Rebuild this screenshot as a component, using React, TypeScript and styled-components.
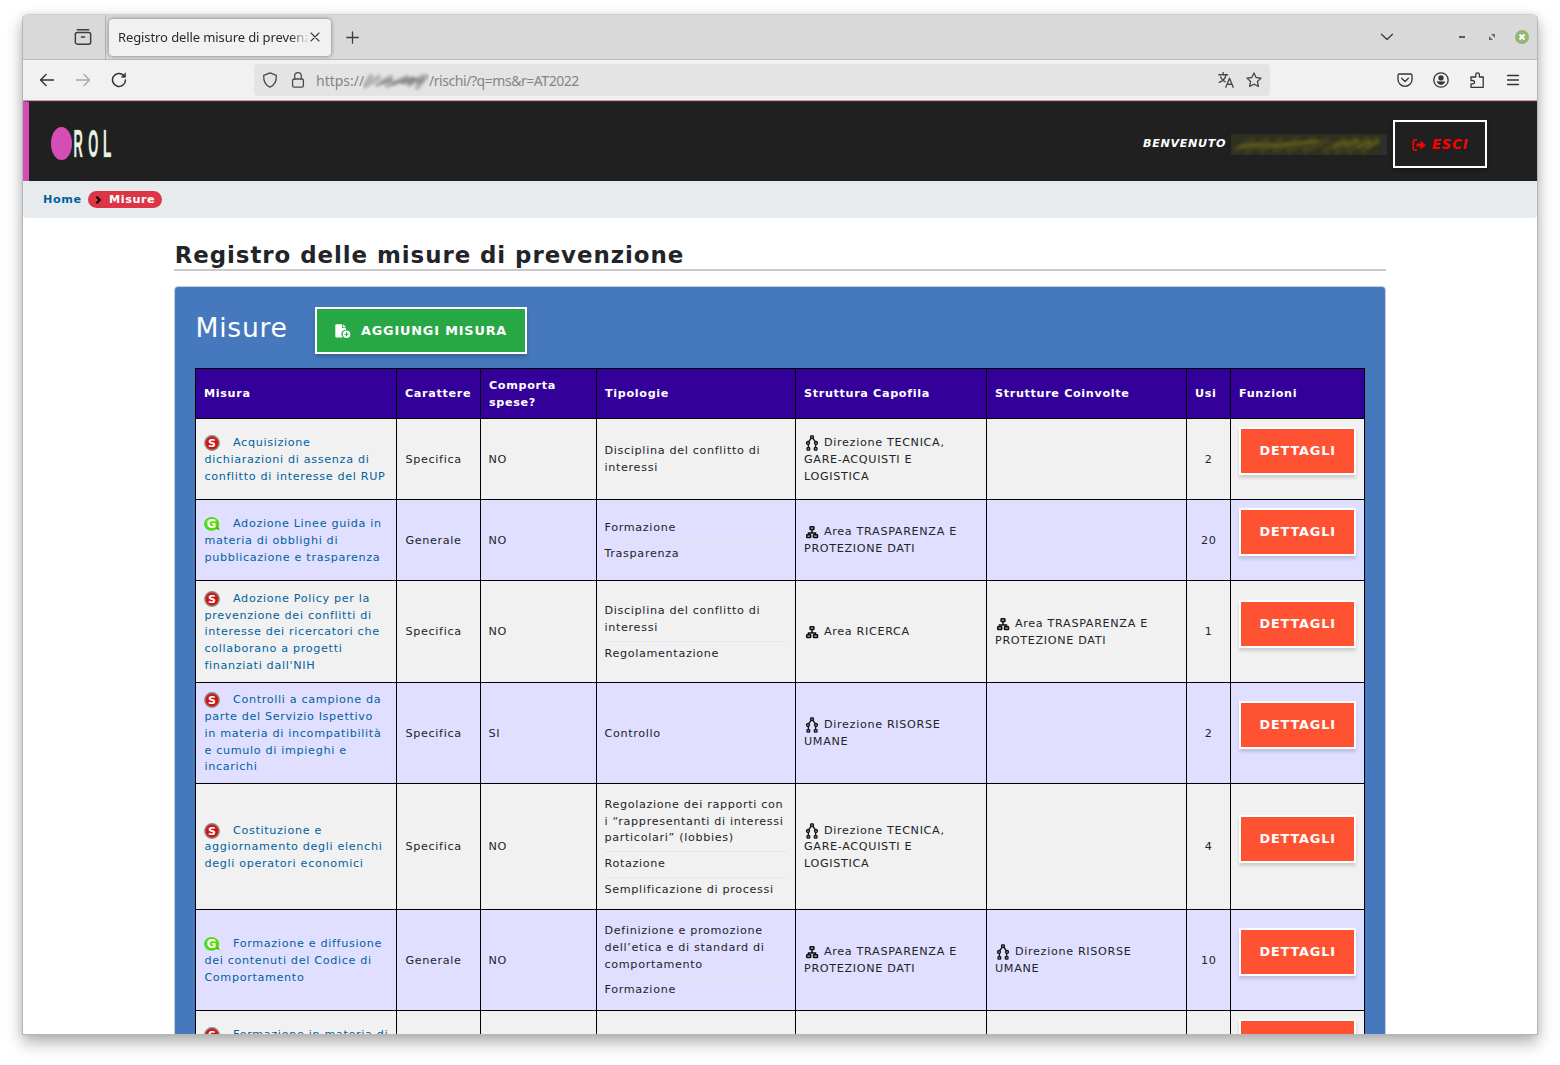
import React from "react";
import styled, { createGlobalStyle, css } from "styled-components";

const GlobalStyle = createGlobalStyle`
  *, *::before, *::after { box-sizing: border-box; }
  html, body { margin: 0; background: #fff; }
  body { overflow: hidden; font-family: "DejaVu Sans", sans-serif; color: #212529; }
`;

const Desktop = styled.div`
  width: 1560px;
  height: 1065px;
  padding: 14px 22px;
  overflow: hidden;
`;

const Window = styled.div`
  display: flex;
  flex-direction: column;
  width: 1516px;
  height: 1021px;
  border: 1px solid #b6b6b6;
  border-top-color: #cfcfcf;
  border-radius: 6px 6px 0 0;
  background: #fff;
  overflow: hidden;
  box-shadow: 0 8px 16px rgba(0, 0, 0, 0.3), 0 0 8px rgba(0, 0, 0, 0.08);
`;

const TabStrip = styled.div`
  display: flex;
  align-items: center;
  flex: none;
  height: 45px;
  background: #d9d9d9;
  border-bottom: 1px solid #b9b9b9;
  color: #3c3c3c;
  svg { display: block; flex: none; }
`;

const FirefoxView = styled.div`
  display: flex;
  align-items: center;
  justify-content: flex-end;
  width: 83px;
  height: 44px;
  padding-right: 13px;
  border-right: 1px solid #b4b4b4;
`;

const Tab = styled.div`
  display: flex;
  align-items: center;
  width: 222px;
  height: 37px;
  margin-left: 3px;
  padding: 0 11px 0 9px;
  border-radius: 4px;
  background: #f1f1f1;
  box-shadow: 0 0 4px rgba(0, 0, 0, 0.45);
`;

const TabTitle = styled.div`
  flex: 1;
  overflow: hidden;
  white-space: nowrap;
  font: 13px/20px "Noto Sans", "Open Sans", sans-serif;
  letter-spacing: -0.1px;
  color: #2a2a2a;
  mask-image: linear-gradient(to right, #000 172px, transparent 191px);
`;

const NewTab = styled.div`
  margin-left: 15px;
`;

const WindowControls = styled.div`
  display: flex;
  align-items: center;
  margin-left: auto;
  padding-right: 8px;
`;

const Spacer = styled.div<{ $w: number }>`
  flex: none;
  width: ${(p) => p.$w}px;
`;

const Toolbar = styled.div`
  display: flex;
  align-items: center;
  flex: none;
  height: 41px;
  background: #f1f1f1;
  border-bottom: 1px solid #aaa;
  color: #333;
  svg { display: block; flex: none; }
`;

const NavButtons = styled.div`
  display: flex;
  flex: none;
  gap: 20px;
  width: 231px;
  padding-left: 16px;
`;

const AddressBar = styled.div`
  display: flex;
  align-items: center;
  flex: none;
  width: 1016px;
  height: 32px;
  padding: 0 8px;
  border-radius: 4px;
  background: #e4e4e4;
  color: #4a4a4a;
`;

const Url = styled.div`
  display: flex;
  align-items: center;
  flex: 1;
  margin-left: 10px;
  padding-top: 1px;
  font: 14px/20px "Noto Sans", "Open Sans", sans-serif;
  color: #858585;
`;

const UrlPart = styled.span<{ $ls: number; $w: number }>`
  width: ${(p) => p.$w}px;
  white-space: nowrap;
  letter-spacing: ${(p) => p.$ls}px;
`;

const ToolbarIcons = styled.div`
  display: flex;
  flex: none;
  gap: 20px;
  margin-left: 127px;
`;

const Page = styled.div`
  flex: 1;
  min-height: 0;
  overflow: hidden;
`;

const Header = styled.header`
  display: flex;
  align-items: center;
  height: 80px;
  padding: 5px 50px 0 21px;
  border-left: 6px solid #d64db6;
  border-top: 1px dotted #a3163c;
  background: #202020;
`;

const Welcome = styled.div`
  display: flex;
  align-items: center;
  margin-left: auto;
  font-size: 11.2px;
  font-weight: bold;
  font-style: italic;
  letter-spacing: 0.65px;
  color: #fff;
`;

const WelcomeLabel = styled.span`
  width: 88px;
  padding-bottom: 1px;
`;

const buttonBase = css`
  display: flex;
  align-items: center;
  border: 2px solid #fff;
  color: #fff;
  font-family: "DejaVu Sans", sans-serif;
  font-weight: bold;
  font-size: 12.8px;
  letter-spacing: 0.85px;
  line-height: 1.5;
  text-transform: uppercase;
  white-space: nowrap;
  text-decoration: none;
`;

const ExitButton = styled.a`
  ${buttonBase}
  width: 94px;
  height: 48px;
  margin-left: 6px;
  padding: 1px 0 0 17px;
  gap: 6px;
  font-size: 13.2px;
  color: #f00;
  box-shadow: 0 2px 4px rgba(0, 0, 0, 0.3);
`;

const AddButton = styled.a`
  ${buttonBase}
  width: 212px;
  height: 47px;
  padding-left: 18px;
  gap: 10px;
  background: #28a745;
  box-shadow: 0 3px 4px rgba(0, 0, 0, 0.2);
`;

const DetailButton = styled.a`
  ${buttonBase}
  width: 117px;
  height: 48px;
  margin-bottom: 16px;
  padding-left: 18.5px;
  background: #ff5233;
  box-shadow: 0 3px 3px rgba(0, 0, 0, 0.14);
`;

const Breadcrumb = styled.nav`
  display: flex;
  align-items: center;
  height: 37px;
  padding-left: 20px;
  border-radius: 0 0 4px 4px;
  background: #e7ebee;
  font-size: 11.2px;
  font-weight: bold;
  letter-spacing: 0.6px;
`;

const HomeLink = styled.a`
  width: 45px;
  color: #00629f;
`;

const Crumb = styled.span`
  display: flex;
  align-items: center;
  width: 74px;
  height: 17px;
  padding-left: 7px;
  gap: 7px;
  border-radius: 9px;
  background: #dc3545;
  color: #fff;
`;

const Container = styled.main`
  width: 1212px;
  margin: 0 auto;
  padding-top: 20px;
`;

const Title = styled.h1`
  height: 33px;
  margin: 0 0 15px;
  padding-left: 0.7px;
  border-bottom: 2px solid #c9c9c9;
  font-size: 22.9px;
  line-height: 34px;
  font-weight: bold;
  letter-spacing: 0.95px;
`;

const Card = styled.section`
  padding: 20px;
  border: 1px solid #c7d0dc;
  border-radius: 4px;
  background: #4678bd;
`;

const CardHead = styled.div`
  display: flex;
  height: 61px;
`;

const CardTitle = styled.h2`
  width: 120px;
  margin: 0;
  padding-left: 0.6px;
  font-size: 26.6px;
  line-height: 41px;
  font-weight: normal;
  letter-spacing: 0.7px;
  color: #fff;
`;

const Table = styled.table`
  width: 1170px;
  table-layout: fixed;
  border-spacing: 0;
  border-collapse: separate;
  border-top: 1px solid #000;
  border-left: 1px solid #000;
  font-size: 11.2px;
  line-height: 16.8px;
  letter-spacing: 0.66px;
`;

const Col = styled.col<{ $w: number }>`
  width: ${(p) => p.$w}px;
`;

const Th = styled.th`
  height: 50px;
  padding: 2px 8px 0;
  border-right: 1px solid #000;
  border-bottom: 1px solid #000;
  background: #330099;
  color: #fff;
  text-align: left;
  vertical-align: middle;
`;

const Tr = styled.tr<{ $h: number; $alt: boolean }>`
  height: ${(p) => p.$h}px;
  background: ${(p) => (p.$alt ? "#e0dfff" : "#f1f1f1")};
`;

const Td = styled.td<{ $center?: boolean; $top?: boolean; $shift?: number; $left?: number }>`
  padding: ${(p) => p.$shift ?? 2}px 8px 0 ${(p) => p.$left ?? 8.4}px;
  border-right: 1px solid #000;
  border-bottom: 1px solid #000;
  vertical-align: middle;
  text-align: ${(p) => (p.$center ? "center" : "left")};
  ${(p) => p.$top && css`
    padding-top: 15.6px;
    vertical-align: top;
    white-space: nowrap;
  `}
`;

const ActionCell = styled(Td)`
  padding: 0 8px;
`;

const MeasureLink = styled.a`
  color: #00629f;
  svg { vertical-align: middle; margin-right: 13px; margin-left: -0.4px; }
`;

const Unit = styled.span`
  svg { vertical-align: middle; margin-right: 4px; }
`;

const TypeItem = styled.div<{ $alt: boolean }>`
  padding: 4px 0;
  & + & { border-top: 1px solid ${(p) => (p.$alt ? "#e4e8ea" : "#e7eaec")}; }
`;

const stroke = { fill: "none", stroke: "currentColor", strokeLinecap: "round", strokeLinejoin: "round" } as const;

const Glyph = ({ children, w = 1.4, size = 16 }: { children: React.ReactNode; w?: number; size?: number }) => (
  <svg width={size} height={size} viewBox="0 0 16 16" {...stroke} strokeWidth={w}>{children}</svg>
);

const Logo = () => (
  <svg width="64" height="36" viewBox="0 0 64 36">
    <ellipse cx="11.5" cy="17.5" rx="10.5" ry="16.5" fill="#d64db6" />
    <g fontFamily="Liberation Sans, sans-serif" fontSize="38" fontWeight="bold" fill="#efefe6" stroke="#3fae6c" strokeWidth=".7" paintOrder="stroke">
      <text transform="translate(23.5 30.500) scale(.34 1)">R</text>
      <text transform="translate(38.3 30.500) scale(.34 1)">O</text>
      <text transform="translate(53 30.500) scale(.36 1)">L</text>
    </g>
  </svg>
);

const UrlSmudge = () => (
  <svg width="66" height="20" viewBox="0 0 66 20">
    <defs><filter id="us" x="-20%" y="-40%" width="140%" height="180%"><feGaussianBlur stdDeviation="1.7" /></filter></defs>
    <g filter="url(#us)" fill="none" strokeLinecap="round">
      <path d="M2 15 8 5M4 14l12-8M14 14l14-8M46 14l14-9M54 17l10-12M24 15l20-9" stroke="#b0b0b0" strokeWidth="4.400" />
      <path d="M19 12l9-3M30 13l14-5M40 12l10-5M46 12l8-4M55 12l5-4" stroke="#8c8c8c" strokeWidth="3.400" />
    </g>
  </svg>
);

const NameSmudge = () => (
  <svg width="156" height="21" viewBox="0 0 156 21">
    <defs><filter id="ns" x="-5%" y="-20%" width="110%" height="140%"><feGaussianBlur stdDeviation="1.8" /></filter></defs>
    <rect width="156" height="21" fill="#303021" />
    <g filter="url(#ns)" fill="none">
      <path d="M4 16 24 6M14 17 38 6M28 17 52 6M42 17 68 5M56 17 84 5M72 17 98 6M92 18 114 5M104 18 126 4M116 18 138 4M130 18 148 4" stroke="#41411d" strokeWidth="6" />
      <path d="M8 13c22-5 34 1 52-3 10-2 18-1 28-3M102 13 116 7M114 12 128 6M126 13 140 7M136 14 148 7" stroke="#5a5a1e" strokeWidth="3" />
    </g>
    <rect x="151" width="5" height="21" fill="#2e2e31" />
  </svg>
);

const SignOutIcon = () => (
  <svg width="14" height="14" viewBox="0 0 14 14">
    <path d="M5 1.800H2.800A1.500 1.500 0 0 0 1.300 3.300v7.400a1.500 1.500 0 0 0 1.500 1.500H5" fill="none" stroke="#f00" strokeWidth="1.700" />
    <path d="M4.600 5.400h4V2.500L13.800 7l-5.200 4.500V8.600h-4z" fill="#f00" />
  </svg>
);

const FileAddIcon = () => (
  <svg width="16" height="16" viewBox="0 0 16 16" fill="#fff">
    <path d="M1.500 1.200h5.700v3.900h3.700v1.600a4.600 4.600 0 0 0-3.300 7.800H1.500A1.200 1.200 0 0 1 .3 13.300V2.400A1.200 1.200 0 0 1 1.500 1.200zM8.100 1.200l3 3H8.100z" />
    <path fillRule="evenodd" d="M11.500 7.400a3.800 3.800 0 1 1 0 7.600 3.800 3.800 0 0 1 0-7.600zm-.5 1.800v1.500H9.500v1.100H11v1.500h1.100v-1.500h1.500v-1.100h-1.500V9.200z" />
  </svg>
);

const Badge = ({ kind }: { kind: "S" | "G" }) =>
  kind === "S" ? (
    <svg width="16" height="16" viewBox="0 0 16 16">
      <circle cx="8" cy="8" r="7.900" fill="#8b8785" />
      <circle cx="8" cy="8" r="6.400" fill="#d8100f" />
      <path d="M3 6a5.300 5.300 0 0 1 10 0z" fill="#a33" opacity=".7" />
      <text x="8" y="12" textAnchor="middle" fontFamily="DejaVu Sans, sans-serif" fontWeight="bold" fontSize="11" letterSpacing="0" fill="#fff">S</text>
    </svg>
  ) : (
    <svg width="16" height="16" viewBox="0 0 16 16">
      <ellipse cx="7.600" cy="7.800" rx="7.600" ry="6.900" fill="#4fdb0b" />
      <path d="M11 12.500 15.800 14.200 14 10z" fill="#43bd0a" />
      <path d="M2 6a6 5 0 0 1 11 0z" fill="#a2ee78" opacity=".6" />
      <text x="7.600" y="12" textAnchor="middle" fontFamily="DejaVu Sans, sans-serif" fontWeight="bold" fontSize="11.500" letterSpacing="0" fill="#fff">G</text>
    </svg>
  );

const UnitIcon = ({ kind }: { kind: "dir" | "area" }) =>
  kind === "dir" ? (
    <svg width="16" height="16" viewBox="0 0 16 16" fill="#999" stroke="#161616" strokeWidth="1.300">
      <path d="M7.400 3 4.800 6.500M8.600 3l2.600 3.500M4.400 9v4M11.600 9v4" />
      <rect x="6.600" y=".8" width="2.800" height="2.500" rx=".6" />
      <circle cx="4" cy="8" r="1.500" /><circle cx="12" cy="8" r="1.500" />
      <rect x="3" y="12.700" width="2.700" height="2.500" rx=".6" /><rect x="10.300" y="12.700" width="2.700" height="2.500" rx=".6" />
    </svg>
  ) : (
    <svg width="16" height="16" viewBox="0 0 16 16" fill="#bbb" stroke="#0d0d0d" strokeWidth="1.500">
      <path d="M8 6v3M4.500 11.200V8.900h7v2.300" fill="none" />
      <rect x="6.100" y="2.700" width="3.800" height="2.800" rx=".5" />
      <rect x="2.700" y="10.800" width="4" height="2.700" rx=".5" /><rect x="9.500" y="10.800" width="4" height="2.700" rx=".5" />
    </svg>
  );

type UnitRef = { kind: "dir" | "area"; name: string };
type Measure = {
  badge: "S" | "G"; name: string; nature?: string; cost?: string; types?: string[];
  lead?: UnitRef; involved?: UnitRef; uses?: number; height: number; top?: boolean;
};

const tecnica: UnitRef = { kind: "dir", name: "Direzione TECNICA, GARE-ACQUISTI E LOGISTICA" };
const trasparenza: UnitRef = { kind: "area", name: "Area TRASPARENZA E PROTEZIONE DATI" };
const umane: UnitRef = { kind: "dir", name: "Direzione RISORSE UMANE" };

const measures: Measure[] = [
  { badge: "S", name: "Acquisizione dichiarazioni di assenza di conflitto di interesse del RUP", nature: "Specifica", cost: "NO", types: ["Disciplina del conflitto di interessi"], lead: tecnica, uses: 2, height: 81 },
  { badge: "G", name: "Adozione Linee guida in materia di obblighi di pubblicazione e trasparenza", nature: "Generale", cost: "NO", types: ["Formazione", "Trasparenza"], lead: trasparenza, uses: 20, height: 81 },
  { badge: "S", name: "Adozione Policy per la prevenzione dei conflitti di interesse dei ricercatori che collaborano a progetti finanziati dall'NIH", nature: "Specifica", cost: "NO", types: ["Disciplina del conflitto di interessi", "Regolamentazione"], lead: { kind: "area", name: "Area RICERCA" }, involved: trasparenza, uses: 1, height: 102 },
  { badge: "S", name: "Controlli a campione da parte del Servizio Ispettivo in materia di incompatibilità e cumulo di impieghi e incarichi", nature: "Specifica", cost: "SI", types: ["Controllo"], lead: umane, uses: 2, height: 101 },
  { badge: "S", name: "Costituzione e aggiornamento degli elenchi degli operatori economici", nature: "Specifica", cost: "NO", types: ["Regolazione dei rapporti con i “rappresentanti di interessi particolari” (lobbies)", "Rotazione", "Semplificazione di processi"], lead: tecnica, uses: 4, height: 126 },
  { badge: "G", name: "Formazione e diffusione dei contenuti del Codice di Comportamento", nature: "Generale", cost: "NO", types: ["Definizione e promozione dell’etica e di standard di comportamento", "Formazione"], lead: trasparenza, involved: umane, uses: 10, height: 101 },
  { badge: "S", name: "Formazione in materia di", height: 81, top: true },
];

const columns: [string, number][] = [
  ["Misura", 201], ["Carattere", 84], ["Comporta spese?", 116], ["Tipologie", 199],
  ["Struttura Capofila", 191], ["Strutture Coinvolte", 200], ["Usi", 44], ["Funzioni", 134],
];

const UnitLabel = ({ unit }: { unit?: UnitRef }) =>
  unit ? <Unit><UnitIcon kind={unit.kind} />{unit.name}</Unit> : null;

const MeasureRow = ({ m, alt }: { m: Measure; alt: boolean }) => (
  <Tr $h={m.height} $alt={alt}>
    <Td $top={m.top} $shift={2.6}><MeasureLink><Badge kind={m.badge} />{m.name}</MeasureLink></Td>
    <Td>{m.nature}</Td>
    <Td $left={7.5}>{m.cost}</Td>
    <Td $shift={2.4} $left={7.5}>{m.types?.map((t) => <TypeItem key={t} $alt={alt}>{t}</TypeItem>)}</Td>
    <Td $shift={2.4} $left={8}><UnitLabel unit={m.lead} /></Td>
    <Td $shift={2.4} $left={8}><UnitLabel unit={m.involved} /></Td>
    <Td $center>{m.uses}</Td>
    <ActionCell><DetailButton>Dettagli</DetailButton></ActionCell>
  </Tr>
);

export default function App() {
  return (
    <Desktop>
      <GlobalStyle />
      <Window>
        <TabStrip>
          <FirefoxView>
            <Glyph size={18} w={1.3}><path d="M3 1.600h10" /><rect x="1.200" y="4" width="13.600" height="10.400" rx="1.800" /><path d="M6.600 8h2.800" /></Glyph>
          </FirefoxView>
          <Tab>
            <TabTitle>Registro delle misure di prevenzione</TabTitle>
            <svg width="10" height="10" viewBox="0 0 10 10" {...stroke} strokeWidth="1.100"><path d="m1 1 8 8M9 1 1 9" /></svg>
          </Tab>
          <NewTab><svg width="13" height="13" viewBox="0 0 13 13" {...stroke} strokeWidth="1.300"><path d="M6.500.8v11.400M.8 6.500h11.400" /></svg></NewTab>
          <WindowControls>
            <svg width="14" height="8" viewBox="0 0 14 8" {...stroke} strokeWidth="1.300"><path d="m1.500 1.200 5.500 5.300 5.500-5.300" /></svg>
            <Spacer $w={65} />
            <svg width="6" height="2" viewBox="0 0 6 2"><path d="M0 0h6v2H0z" fill="#5a5a5a" /></svg>
            <Spacer $w={24} />
            <svg width="6" height="6" viewBox="0 0 6 6" fill="#666"><path d="M2 0h4v4zM0 2v4h4z" /></svg>
            <Spacer $w={20} />
            <svg width="14" height="14" viewBox="0 0 14 14"><circle cx="7" cy="7" r="7" fill="#95b576" /><path d="m4.500 4.500 5 5M9.500 4.500l-5 5" stroke="#fff" strokeWidth="2" /></svg>
          </WindowControls>
        </TabStrip>
        <Toolbar>
          <NavButtons>
            <Glyph><path d="M1.500 8h13M7 2.500 1.500 8 7 13.500" /></Glyph>
            <svg width="16" height="16" viewBox="0 0 16 16" {...stroke} stroke="#a5a5a5" strokeWidth="1.400"><path d="M14.500 8h-13M9 2.500 14.500 8 9 13.500" /></svg>
            <Glyph w={1.5}><path d="M12.500 3.200A6.500 6.500 0 1 0 14.500 8" /><path d="M14.500 1.200v4h-4z" fill="currentColor" strokeWidth=".6" /></Glyph>
          </NavButtons>
          <AddressBar>
            <Glyph><path d="M8 .9 14.300 3.300c.3 4.600-1 9.600-6.300 11.900C2.700 12.900 1.400 7.900 1.700 3.300z" strokeWidth="1.300" /></Glyph>
            <Spacer $w={12} />
            <Glyph w={1.3}><rect x="2.600" y="7" width="10.800" height="8.200" rx="1.500" /><path d="M4.700 7V4a3.300 3.300 0 0 1 6.600 0v3" /></Glyph>
            <Url>
              <UrlPart $ls={-0.02} $w={47}>https://</UrlPart>
              <UrlSmudge />
              <UrlPart $ls={-0.45} $w={160}>/rischi/?q=ms&amp;r=AT2022</UrlPart>
            </Url>
            <Glyph w={1.4}><path d="M.8 2.800h8.800M5.200 .6v2.200M8 2.800C7.400 6.200 4.800 9 1.200 10.400M2.600 5C3.700 7.600 5.400 9 7.200 9.800M7.800 15.200l3.700-9 3.700 9M9 12.200h5" /></Glyph>
            <Spacer $w={12} />
            <Glyph w={1.3}><path d="m8 .9 2.100 4.600 5 .6-3.700 3.400 1 5L8 12.100l-4.400 2.400 1-5L.9 6.100l5-.6z" /></Glyph>
          </AddressBar>
          <ToolbarIcons>
            <Glyph w={1.3}><path d="M2.500 2h11a1.500 1.500 0 0 1 1.500 1.500V7.500a7 6.800 0 0 1-14 0V3.500A1.500 1.500 0 0 1 2.500 2zM4.600 6.300 8 9.500l3.400-3.200" /></Glyph>
            <Glyph w={1.3}><circle cx="8" cy="8" r="7.200" /><circle cx="8" cy="5.900" r="2" fill="currentColor" /><path d="M4.300 9.800h7.400c-.4 1.800-1.800 2.800-3.700 2.800s-3.300-1-3.700-2.800z" fill="currentColor" strokeWidth=".6" /></Glyph>
            <Glyph w={1.3}><path d="M2 15.300h12.200V5h-3.800V2.600a1.800 1.800 0 0 0-3.600 0V5H2v3.500h1.800a1.700 1.700 0 0 1 0 3.400H2z" /></Glyph>
            <Glyph w={1.3}><path d="M2.500 3.500h11M2.500 8h11M2.500 12.500h11" /></Glyph>
          </ToolbarIcons>
        </Toolbar>
        <Page>
          <Header>
            <Logo />
            <Welcome>
              <WelcomeLabel>BENVENUTO</WelcomeLabel>
              <NameSmudge />
              <ExitButton><SignOutIcon />Esci</ExitButton>
            </Welcome>
          </Header>
          <Breadcrumb>
            <HomeLink>Home</HomeLink>
            <Crumb>
              <svg width="7" height="8" viewBox="0 0 7 8" fill="none" stroke="#000" strokeWidth="2"><path d="m1.500 .8 3.300 3.200-3.300 3.200" /></svg>
              Misure
            </Crumb>
          </Breadcrumb>
          <Container>
            <Title>Registro delle misure di prevenzione</Title>
            <Card>
              <CardHead>
                <CardTitle>Misure</CardTitle>
                <AddButton><FileAddIcon />Aggiungi misura</AddButton>
              </CardHead>
              <Table>
                <colgroup>{columns.map(([name, w]) => <Col key={name} $w={w} />)}</colgroup>
                <thead><tr>{columns.map(([name]) => <Th key={name}>{name}</Th>)}</tr></thead>
                <tbody>{measures.map((m, i) => <MeasureRow key={m.name} m={m} alt={i % 2 === 1} />)}</tbody>
              </Table>
            </Card>
          </Container>
        </Page>
      </Window>
    </Desktop>
  );
}
